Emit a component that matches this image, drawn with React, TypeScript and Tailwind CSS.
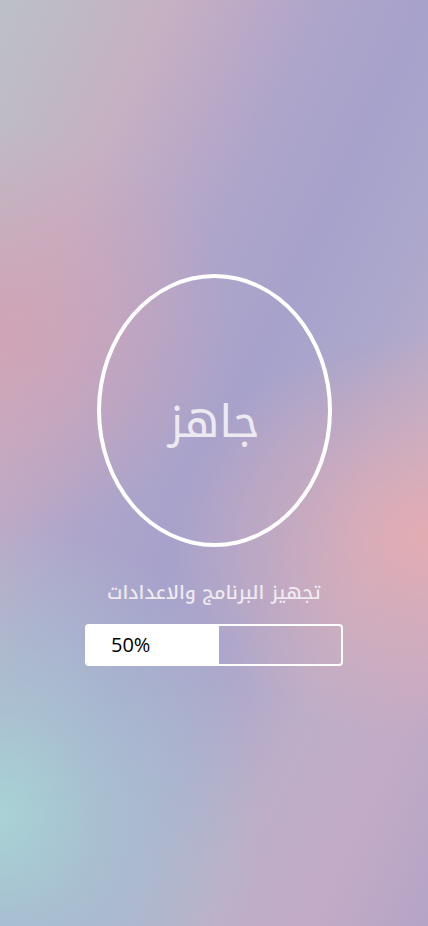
import React from "react";

export default function App() {
  return (
    <div
      className="relative w-full h-[926px] overflow-hidden flex flex-col items-center bg-[radial-gradient(ellipse_62%_32%_at_0%_88%,#a8d3d5_0%,rgba(168,211,213,0.6)_35%,rgba(168,211,213,0)_100%),radial-gradient(ellipse_60%_22%_at_100%_58%,#e3acb3_0%,rgba(227,172,179,0.5)_45%,rgba(227,172,179,0)_100%),radial-gradient(ellipse_55%_22%_at_0%_36%,#d0a3b6_0%,rgba(208,163,182,0.55)_40%,rgba(208,163,182,0)_100%),linear-gradient(115deg,#bcc0c6_0%,#c1b7c4_12%,#c6b0c2_20%,#bba9c7_29%,#aea5ca_38%,#a7a2cb_50%,#aca7cb_62%,#bdaec8_74%,#c2abc6_86%,#b5a4c6_100%)]"
      style={{ fontFamily: '"Noto Kufi Arabic", "Noto Sans Arabic", "DejaVu Sans", "Noto Sans", sans-serif' }}
    >
      <div className="mt-[274px] w-[235px] h-[273px] rounded-[50%] border-[4px] border-white flex items-center justify-center">
        <span
          dir="rtl"
          className="text-[45px] leading-none text-[#ece9f0] mt-[24px]"
        >
          جاهز
        </span>
      </div>
      <div
        dir="rtl"
        className="mt-[37px] text-[19px] font-medium leading-none text-[#f0eaf0]"
      >
        تجهيز البرنامج والاعدادات
      </div>
      <div className="mt-[21px] w-[258px] h-[42px] rounded-[4px] border-2 border-white flex overflow-hidden">
        <div
          className="h-full bg-white flex items-center pl-[24px] text-[20px] text-black"
          style={{ width: "52%", fontFamily: '"Open Sans", sans-serif' }}
        >
          50%
        </div>
      </div>
    </div>
  );
}
